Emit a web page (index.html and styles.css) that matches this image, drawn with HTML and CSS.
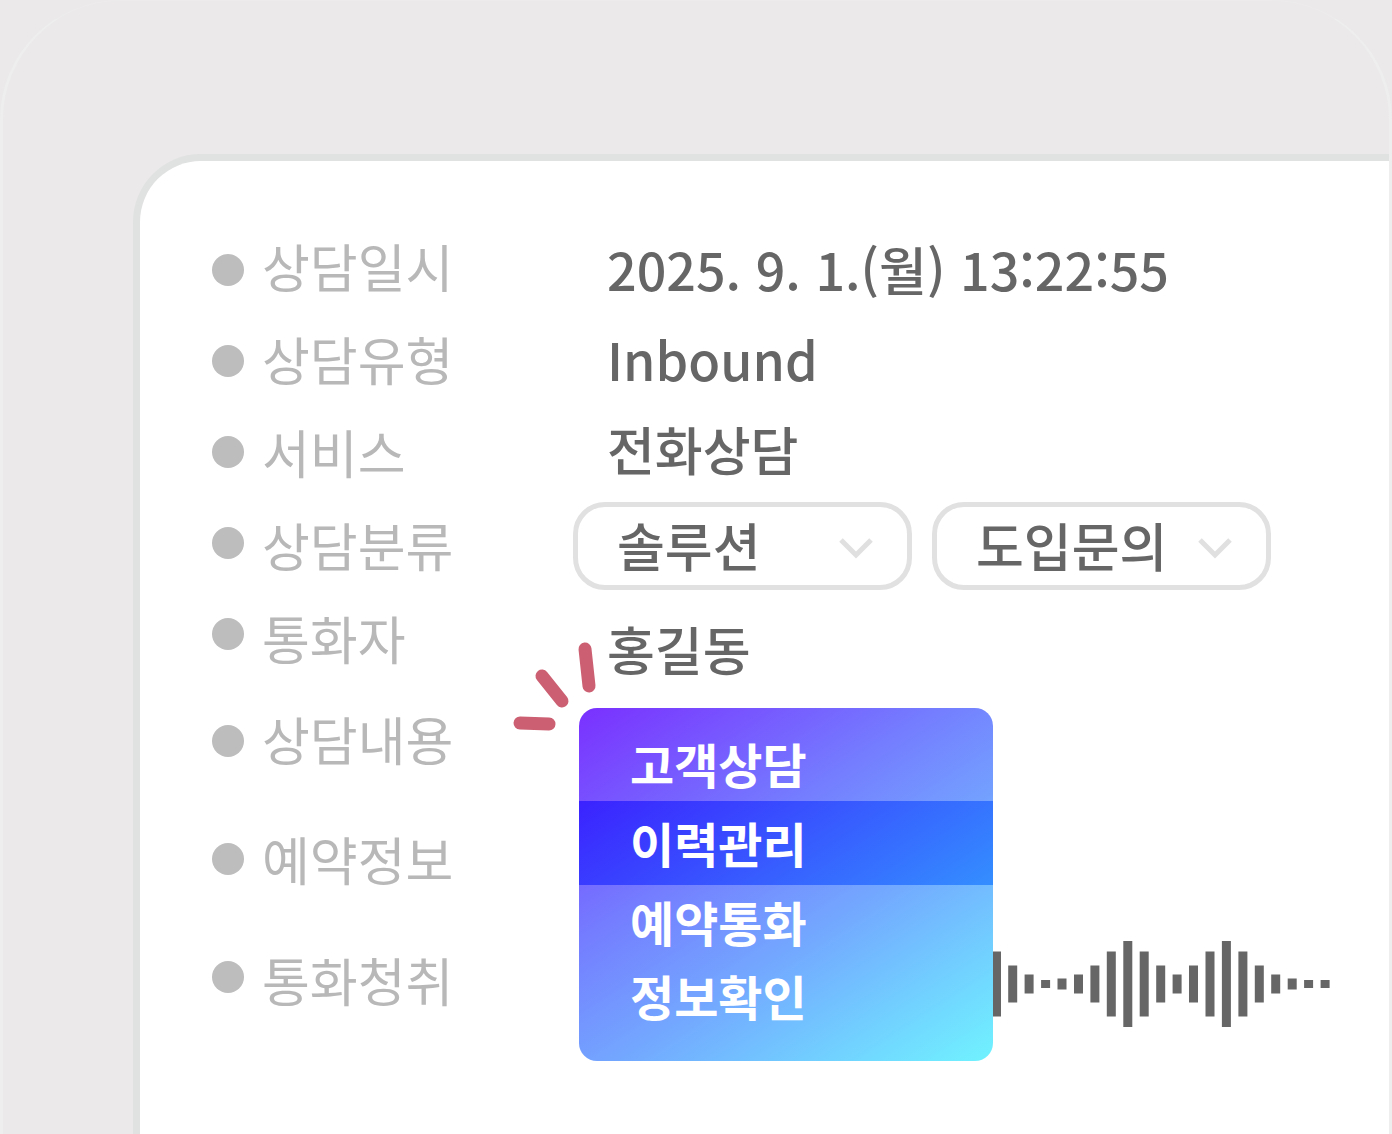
FILE: index.html
```
<!DOCTYPE html>
<html lang="ko">
  <head>
    <meta charset="UTF-8" />
    <meta name="viewport" content="width=device-width, initial-scale=1.0" />
    <title>상담 정보</title>
    <link rel="stylesheet" href="styles.css">
  </head>
  <body>
    <div class="frame">
      <main class="card">
        <div class="dots" aria-hidden="true">
          <span class="dot"></span>
          <span class="dot"></span>
          <span class="dot"></span>
          <span class="dot"></span>
          <span class="dot"></span>
          <span class="dot"></span>
          <span class="dot"></span>
          <span class="dot"></span>
        </div>

        <div class="labels">
          <span>상담일시</span>
          <span>상담유형</span>
          <span>서비스</span>
          <label for="category">상담분류</label>
          <span>통화자</span>
          <span>상담내용</span>
          <span>예약정보</span>
          <span>통화청취</span>
        </div>

        <div class="values">
          <p class="value">2025. 9. 1.(월) 13:22:55</p>
          <p class="value">Inbound</p>
          <p class="value">전화상담</p>

          <div class="selects">
            <div class="select-box">
              <select id="category">
                <option>솔루션</option>
              </select>
              <svg class="chevron" viewBox="0 0 34 22" aria-hidden="true">
                <path d="M2 3 L17 18 L32 3" />
              </svg>
            </div>
            <div class="select-box">
              <select id="sub-category" aria-label="상담분류 상세">
                <option>도입문의</option>
              </select>
              <svg class="chevron" viewBox="0 0 34 22" aria-hidden="true">
                <path d="M2 3 L17 18 L32 3" />
              </svg>
            </div>
          </div>

          <p class="value caller">홍길동</p>

          <div class="history">
            <nav class="menu">
              <button type="button">고객상담</button>
              <button type="button" class="active">이력관리</button>
              <button type="button">예약통화</button>
              <button type="button">정보확인</button>
              <svg class="spark" viewBox="0 0 86 94" aria-hidden="true">
                <path d="M74 8 L78 45" />
                <path d="M31 35 L51 60" />
                <path d="M9 82 L38 83" />
              </svg>
            </nav>
            <svg class="wave" viewBox="0 0 342 88" role="img" aria-label="통화 녹음">
              <path d="M3.5 11.5v65M19.7 25.5v37M36.1 34.5v19M52.6 40v8M69 38.5v11M85.5 34.5v19M101.9 25.5v37M118.3 11.5v65M134.8 1v86M151.2 11.5v65M167.7 25.5v37M184.1 34.5v19M200.5 25.5v37M217 11.5v65M233.4 1v86M249.9 11.5v65M266.3 25.5v37M282.7 34.5v19M299.2 38.5v11M315.6 40v8M332.1 40v8" />
            </svg>
          </div>
        </div>
      </main>
    </div>
  </body>
</html>
```

FILE: styles.css
```
* {
  margin: 0;
  padding: 0;
  box-sizing: border-box;
  font-family: "Noto Sans CJK KR", sans-serif;
}

body {
  background-color: #ebe9ea;
}

.frame {
  display: flex;
  min-height: 100vh;
  padding: 153px 0 0 130px;
  border: 3px solid #eeeeee;
  border-top: 1px solid #edebec;
  border-bottom: 0;
  border-radius: 120px 120px 0 0;
}

.card {
  flex: 1;
  display: flex;
  padding: 58px 0 40px 72px;
  background-color: #ffffff;
  border: 7px solid #e0e1e1;
  border-right: 0;
  border-bottom: 0;
  border-radius: 68px 0 0 0;
}

.dots {
  display: grid;
  grid-template-rows: repeat(5, 91px) 124px 112px 124px;
  align-content: start;
  align-items: center;
  width: 50px;
  padding-top: 5px;
}

.dot {
  width: 32px;
  height: 32px;
  border-radius: 50%;
  background-color: #bdbdbd;
}

.labels {
  display: grid;
  grid-template-rows: repeat(5, 93px) 109px 131px 111px;
  align-content: start;
  align-items: center;
  width: 311px;
  font-size: 52px;
  line-height: 64px;
  color: #b8b8b8;
}

.values {
  flex: 1;
  padding-top: 5px;
}

.value {
  padding-left: 34px;
  font-size: 52px;
  font-weight: 500;
  line-height: 90px;
  color: #666666;
}

.selects {
  display: flex;
  gap: 20px;
  padding-top: 8px;
}

.select-box {
  position: relative;
  flex: 1;
  max-width: 339px;
}

.select-box select {
  width: 100%;
  height: 88px;
  padding: 0 0 6px 39px;
  border: 5px solid #e1e1e1;
  border-radius: 32px;
  background-color: #ffffff;
  font-size: 52px;
  font-weight: 500;
  color: #666666;
  appearance: none;
}

.chevron {
  position: absolute;
  top: 35px;
  right: 39px;
  width: 34px;
  height: 22px;
  fill: none;
  stroke: #e0e0e0;
  stroke-width: 5;
  pointer-events: none;
}

.caller {
  line-height: 118px;
}

.history {
  display: flex;
  align-items: flex-end;
  padding-left: 6px;
}

.menu {
  position: relative;
  width: 414px;
  padding: 19px 0 28px;
  border-radius: 18px;
  background: linear-gradient(147deg, #7a30ff, #747eff 38%, #73a6ff 60%, #70f3ff);
}

.menu button {
  display: block;
  width: 100%;
  height: 74px;
  padding: 0 0 3px 51px;
  border: none;
  background: none;
  font-size: 48px;
  font-weight: 700;
  line-height: 64px;
  text-align: left;
  color: #ffffff;
  cursor: pointer;
}

.menu button.active {
  height: 84px;
  background: linear-gradient(147deg, #3b22ff, #348eff);
}

.spark {
  position: absolute;
  top: -67px;
  left: -68px;
  width: 86px;
  height: 94px;
  fill: none;
  stroke: #cc6072;
  stroke-width: 13;
  stroke-linecap: round;
}

.wave {
  width: 342px;
  height: 88px;
  margin-bottom: 33px;
  fill: none;
  stroke: #666666;
  stroke-width: 9;
}
```
